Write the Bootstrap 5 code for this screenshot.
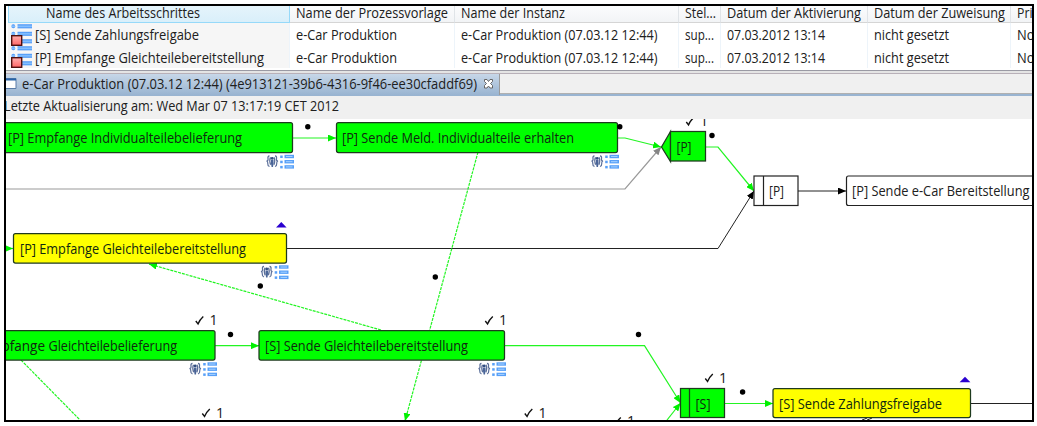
<!DOCTYPE html>
<html lang="de">
<head>
<meta charset="utf-8">
<meta name="viewport" content="width=device-width, initial-scale=1">
<title>e-Car Produktion</title>
<link href="https://cdn.jsdelivr.net/npm/bootstrap@5.3.0/dist/css/bootstrap.min.css" rel="stylesheet">
<style>
body{font-family:"Open Sans","Noto Sans",sans-serif;font-size:14.3px;color:#202020;background:#fff}
.frame{width:1030px;height:418px;margin:4px 0 0 4px;border:2px solid #000}
.worklist{display:grid;grid-template-columns:284px 165px 224px 42px 147px 143px 21px;grid-template-rows:17px 23px 22px;height:64px;padding-bottom:2px;flex:none}
.cell{white-space:nowrap;overflow:hidden;padding-left:6px;border-right:1px solid #edf4fa;min-width:0}
.fit{display:block;overflow:visible}
.cell:nth-child(7n){border-right:0}
.hd{background:linear-gradient(#fbfcfd,#f2f4f6);border-right-color:#e0e4e8;border-bottom:1px solid #d5d5d5}
.hd:first-child{margin-left:2px;background:linear-gradient(#e5f4fb,#d9effa);border:1px solid #96d9f9;border-top:0}
.first{background:#f6f6f6;margin-left:2px;padding-left:3px}
.sash{height:4px;background:#e4e4e4;border-top:1px solid #9a9aa4;border-bottom:1px solid #b8b0b8;flex:none}
.tabs{height:22px;background:#f0f0f0;border-bottom:2px solid #99b4d1;flex:none}
.tabitem{width:494px;height:21px;background:linear-gradient(#c7d7e8,#99b4d1);border-right:1px solid #9a9a9a;}
.tabrest{height:20px;border-bottom:1px solid #b0b0b0}
.status{height:23px;background:#f0f0f0;flex:none}
svg text{font-family:"Open Sans","Noto Sans",sans-serif;font-size:14.3px;fill:#202020}
.g{stroke:#22f522;stroke-width:1.2;fill:none}.dash{stroke-dasharray:3 1}
.k{stroke:#222;fill:none}
.node{stroke:#1e3a1e;stroke-width:1.25}
svg .nt{font-size:13.6px;fill:#102810}
svg .plain{fill:#202020}
</style>
</head>
<body class="overflow-hidden">
<svg width="0" height="0" class="position-absolute">
<defs>
<linearGradient id="bar" x2="0" y2="1"><stop stop-color="#3b8cf5"/><stop offset=".5" stop-color="#8cc4ff"/><stop offset="1" stop-color="#3b8cf5"/></linearGradient>
<linearGradient id="red" x2="0" y2="1"><stop stop-color="#ffb0b0"/><stop offset="1" stop-color="#f66"/></linearGradient>
<g id="task">
<g fill="url(#bar)"><rect x="6.500" y=".3" width="14.500" height="4"/><rect x="6.500" y="7.800" width="14.500" height="4"/><rect x="6.500" y="15.300" width="14.500" height="4"/><circle cx="2.300" cy="2.300" r="2"/><circle cx="2.300" cy="9.800" r="2"/></g>
<rect x=".7" y="11.700" width="10" height="9.600" fill="url(#red)" stroke="#501010" stroke-width="1.400"/></g>
<g id="marks">
<g fill="none" stroke="#5b6f9a" stroke-width="1.250"><path d="M3.500 1.800Q1.600 2 2 4.500T.5 7Q2 7.400 1.800 9.600T3.500 12.500M9 1.800q1.900.2 1.500 2.700T12 7q-1.500.4-1.300 2.600T9 12.500M4.500 3.300Q3 6.500 4.600 10.800M8 3.300q1.500 3.200-.1 7.500"/></g>
<circle cx="6.200" cy="4.400" r="1.400" fill="#314d80"/><path d="M5 6h2.500v3.500l-.5 3.500h-1.400L5 9.500z" fill="#4a6598"/>
<g fill="#58a0f8"><rect x="18.500" y=".8" width="9.500" height="3.400"/><rect x="18.500" y="6" width="9.500" height="3.400"/><rect x="18.500" y="11.200" width="9.500" height="3.400"/><rect x="14.200" y="1.500" width="2.500" height="2.500"/><rect x="14.200" y="6.700" width="2.500" height="2.500"/><rect x="14.200" y="11.900" width="2.500" height="2.500"/></g>
<path d="M20 2.500h6.500M20 7.700h6.500M20 12.900h6.500" stroke="#a9d3ff"/></g>
<g id="done"><path d="M.8 5.500 3 8.400Q4.500 4.500 8.300 1" fill="none" stroke="#111" stroke-width="1.400"/><text x="14.500" y="9.500">1</text></g>
<marker id="ag" viewBox="0 0 8 7" refX="8" refY="3.500" markerWidth="8" markerHeight="7" markerUnits="userSpaceOnUse" orient="auto"><path d="M0 0 8 3.500 0 7z" fill="#00f000"/></marker>
<marker id="ak" viewBox="0 0 8 7" refX="8" refY="3.500" markerWidth="8" markerHeight="7" markerUnits="userSpaceOnUse" orient="auto"><path d="M0 0 8 3.500 0 7z" fill="#000"/></marker>
<marker id="ay" viewBox="0 0 8 7" refX="8" refY="3.500" markerWidth="8" markerHeight="7" markerUnits="userSpaceOnUse" orient="auto"><path d="M0 0 8 3.500 0 7z" fill="#858585"/></marker>
</defs>
</svg>
<main class="frame d-flex flex-column overflow-hidden">
<section class="worklist">
<div class="cell hd"><svg class="fit" width="270" height="16"><text x="31" y="12" textLength="154" lengthAdjust="spacingAndGlyphs">Name des Arbeitsschrittes</text></svg></div>
<div class="cell hd"><svg class="fit" width="155" height="16"><text x="0" y="12" textLength="152" lengthAdjust="spacingAndGlyphs">Name der Prozessvorlage</text></svg></div>
<div class="cell hd"><svg class="fit" width="200" height="16"><text x="0" y="12" textLength="104" lengthAdjust="spacingAndGlyphs">Name der Instanz</text></svg></div>
<div class="cell hd"><svg class="fit" width="34" height="16"><text x="0" y="12" textLength="31" lengthAdjust="spacingAndGlyphs">Stel...</text></svg></div>
<div class="cell hd"><svg class="fit" width="138" height="16"><text x="0" y="12" textLength="134" lengthAdjust="spacingAndGlyphs">Datum der Aktivierung</text></svg></div>
<div class="cell hd"><svg class="fit" width="135" height="16"><text x="0" y="12" textLength="131" lengthAdjust="spacingAndGlyphs">Datum der Zuweisung</text></svg></div>
<div class="cell hd"><svg class="fit" width="16" height="16"><text x="0" y="12" textLength="15.500" lengthAdjust="spacingAndGlyphs">Pri</text></svg></div>

<div class="cell first"><svg class="fit" width="278" height="23"><use href="#task" y="1"/><text x="24" y="17" textLength="164" lengthAdjust="spacingAndGlyphs">[S] Sende Zahlungsfreigabe</text></svg></div>
<div class="cell"><svg class="fit" width="155" height="23"><text x="0" y="17" textLength="101" lengthAdjust="spacingAndGlyphs">e-Car Produktion</text></svg></div>
<div class="cell"><svg class="fit" width="200" height="23"><text x="0" y="17" textLength="196.500" lengthAdjust="spacingAndGlyphs">e-Car Produktion (07.03.12 12:44)</text></svg></div>
<div class="cell"><svg class="fit" width="34" height="23"><text x="0" y="17" textLength="29" lengthAdjust="spacingAndGlyphs">sup...</text></svg></div>
<div class="cell"><svg class="fit" width="138" height="23"><text x="0" y="17" textLength="98" lengthAdjust="spacingAndGlyphs">07.03.2012 13:14</text></svg></div>
<div class="cell"><svg class="fit" width="135" height="23"><text x="0" y="17" textLength="75" lengthAdjust="spacingAndGlyphs">nicht gesetzt</text></svg></div>
<div class="cell"><svg class="fit" width="16" height="23"><text x="0" y="17" textLength="17.500" lengthAdjust="spacingAndGlyphs">No</text></svg></div>

<div class="cell first"><svg class="fit" width="278" height="22"><use href="#task"/><text x="24" y="17" textLength="229" lengthAdjust="spacingAndGlyphs">[P] Empfange Gleichteilebereitstellung</text></svg></div>
<div class="cell"><svg class="fit" width="155" height="22"><text x="0" y="17" textLength="101" lengthAdjust="spacingAndGlyphs">e-Car Produktion</text></svg></div>
<div class="cell"><svg class="fit" width="200" height="22"><text x="0" y="17" textLength="196.500" lengthAdjust="spacingAndGlyphs">e-Car Produktion (07.03.12 12:44)</text></svg></div>
<div class="cell"><svg class="fit" width="34" height="22"><text x="0" y="17" textLength="29" lengthAdjust="spacingAndGlyphs">sup...</text></svg></div>
<div class="cell"><svg class="fit" width="138" height="22"><text x="0" y="17" textLength="98" lengthAdjust="spacingAndGlyphs">07.03.2012 13:14</text></svg></div>
<div class="cell"><svg class="fit" width="135" height="22"><text x="0" y="17" textLength="75" lengthAdjust="spacingAndGlyphs">nicht gesetzt</text></svg></div>
<div class="cell"><svg class="fit" width="16" height="22"><text x="0" y="17" textLength="17.500" lengthAdjust="spacingAndGlyphs">No</text></svg></div>
</section>
<div class="sash"></div>
<nav class="tabs d-flex">
<div class="tabitem"><svg class="fit" width="493" height="20"><path d="M-4 4.500h14v10h-14z" fill="#fff" stroke="#5a7ca8"/><path d="M-4 5.500h14" stroke="#2864a8" stroke-width="2"/><text x="16" y="15" textLength="455" lengthAdjust="spacingAndGlyphs">e-Car Produktion (07.03.12 12:44) (4e913121-39b6-4316-9f46-ee30cfaddf69)</text><path d="M478.500 5.500h2.500l1.500 2 1.500-2h2.500v2l-2 2 2 2v2.500h-2.500l-1.500-2-1.500 2h-2.500v-2.500l2-2-2-2z" fill="#fff" stroke="#666"/></svg></div>
<div class="tabrest flex-grow-1"></div>
</nav>
<div class="status"><svg class="fit" width="500" height="23"><text x="-2" y="15" textLength="335" lengthAdjust="spacingAndGlyphs">Letzte Aktualisierung am: Wed Mar 07 13:17:19 CET 2012</text></svg></div>
<section class="flex-grow-1 overflow-hidden bg-white">
<svg class="d-block" width="1026" height="301" viewBox="6 119 1026 301">
<!-- control flow -->
<path d="M6 189H625L661 147" fill="none" stroke="#999" stroke-width="1.200" marker-end="url(#ay)"/>
<path class="g" d="M292 138H336" marker-end="url(#ag)"/>
<path class="g" d="M617 138H625L661 147" marker-end="url(#ag)"/>
<path class="g" d="M705 147H718L754 191" marker-end="url(#ag)"/>
<path class="k" d="M286 248.500H718L754 191" marker-end="url(#ak)"/>
<path class="k" d="M798 191H846" marker-end="url(#ak)"/>
<path class="g" d="M6 248.500H13" marker-end="url(#ag)"/>
<path class="g" d="M215 345.700H259" marker-end="url(#ag)"/>
<path class="g" d="M504 345.700H644.500L680.500 403" marker-end="url(#ag)"/>
<path class="g" d="M667 420 680.500 403" marker-end="url(#ag)"/>
<path class="g" d="M724 403.500H773" marker-end="url(#ag)"/>
<path class="k" d="M970 403.500H1032"/>
<!-- message flow -->
<path class="g dash" d="M478 152 405 421" marker-end="url(#ag)"/>
<path class="g dash" d="M381 330 149 264" marker-end="url(#ag)"/>
<path class="g dash" d="M21 360 80 420"/>
<!-- activities -->
<g class="node" fill="#0f0">
<rect x="-10" y="122.500" width="302.500" height="30" rx="2"/>
<rect x="336.500" y="122.500" width="281" height="30" rx="2"/>
<path d="M670.500 131.500 661.500 147 670.500 161.500z"/><rect x="670.500" y="131.500" width="35" height="29.500"/>
<rect x="-10" y="330.500" width="225" height="29.500" rx="2"/>
<rect x="259" y="330.500" width="245.500" height="29.500" rx="2"/>
<rect x="680.500" y="388.500" width="44" height="29"/><path d="M689.500 388.500v29"/></g>
<g class="node" fill="#ff0"><rect x="13.500" y="233.500" width="273" height="29.500" rx="2"/><rect x="773" y="388.500" width="197.500" height="29" rx="2"/></g>
<g fill="#fff" stroke="#222" stroke-width="1.200"><rect x="754" y="176" width="44" height="29.500"/><path d="M763.500 176v29.500"/><rect x="846.500" y="176" width="200" height="29.500" rx="2"/></g>
<g>
<text class="nt" x="8" y="143" textLength="234" lengthAdjust="spacingAndGlyphs">[P] Empfange Individualteilebelieferung</text>
<text class="nt" x="342" y="143" textLength="232" lengthAdjust="spacingAndGlyphs">[P] Sende Meld. Individualteile erhalten</text>
<text class="nt" x="676.500" y="151.500" textLength="15" lengthAdjust="spacingAndGlyphs">[P]</text>
<text class="nt plain" x="769" y="196" textLength="15" lengthAdjust="spacingAndGlyphs">[P]</text>
<text class="nt plain" x="852" y="196" textLength="177.500" lengthAdjust="spacingAndGlyphs">[P] Sende e-Car Bereitstellung</text>
<text class="nt" x="20" y="253.500" textLength="226" lengthAdjust="spacingAndGlyphs">[P] Empfange Gleichteilebereitstellung</text>
<text class="nt" x="1.500" y="351" textLength="43.500" lengthAdjust="spacingAndGlyphs">pfange</text>
<text class="nt" x="48.500" y="351" textLength="128.500" lengthAdjust="spacingAndGlyphs">Gleichteilebelieferung</text>
<text class="nt" x="265" y="351" textLength="203" lengthAdjust="spacingAndGlyphs">[S] Sende Gleichteilebereitstellung</text>
<text class="nt" x="695.500" y="408.500" textLength="15" lengthAdjust="spacingAndGlyphs">[S]</text>
<text class="nt" x="779" y="408.500" textLength="163" lengthAdjust="spacingAndGlyphs">[S] Sende Zahlungsfreigabe</text></g>
<!-- state symbols -->
<use href="#marks" x="266" y="154"/><use href="#marks" x="591" y="154"/><use href="#marks" x="260.500" y="264.500"/><use href="#marks" x="189" y="361.500"/><use href="#marks" x="478" y="361.500"/>
<use href="#done" x="195" y="315.500"/><use href="#done" x="484.500" y="315.500"/><use href="#done" x="201.500" y="408"/><use href="#done" x="524" y="408"/><use href="#done" x="704.500" y="373"/><use href="#done" x="685.500" y="116.500"/><use href="#done" x="612.500" y="416.500"/>
<g fill="#000"><circle cx="307.800" cy="126.800" r="2.700"/><circle cx="619.800" cy="126.800" r="2.700"/><circle cx="712" cy="135.500" r="2.700"/><circle cx="260.300" cy="286" r="2.700"/><circle cx="435.300" cy="277" r="2.700"/><circle cx="230.500" cy="334.500" r="2.700"/><circle cx="638.500" cy="334.500" r="2.700"/><circle cx="742.600" cy="392" r="2.700"/></g>
<g fill="#2a00d0"><path d="M276 227.500 281.300 222 286.600 227.500z"/><path d="M959.600 382.200 965 376.700 970.400 382.200z"/></g>
<path d="M862 420q3-1 5-2M867 420q3-1 5-2" stroke="#222" fill="none"/>
</svg>
</section>
</main>
<script src="https://cdn.jsdelivr.net/npm/bootstrap@5.3.0/dist/js/bootstrap.bundle.min.js"></script>
</body>
</html>
